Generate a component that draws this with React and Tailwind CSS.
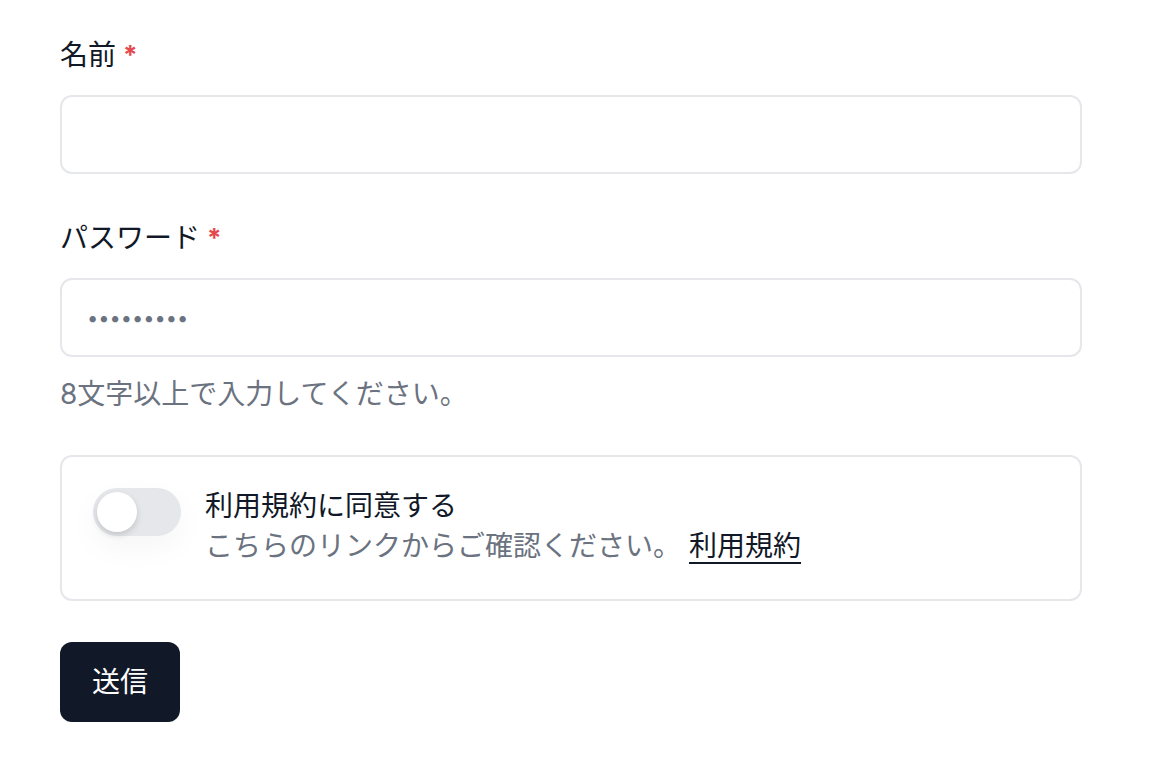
const font = { fontFamily: 'Inter, "Noto Sans CJK JP", sans-serif' };

const Label = ({ children, className = '' }) => (
    <label className={`flex items-center h-[40px] text-[28px] leading-[40px] text-[#111827] ${className}`}>
        {children}
        <span className="ml-[7px] text-[26px] font-bold text-[#e5484d]">*</span>
    </label>
);

const App = () => {
    return (
        <div className="min-h-screen bg-white pl-[60px] pt-[35px]" style={font}>
            <form className="w-[1022px] flex flex-col" onSubmit={(e) => e.preventDefault()}>
                {/* Name */}
                <Label>名前</Label>
                <input
                    type="text"
                    className="mt-[20px] h-[79px] w-full rounded-[12px] border-2 border-[#e5e7eb] px-[26px] text-[28px] text-[#111827] outline-none"
                />

                {/* Password */}
                <Label className="mt-[44px]">パスワード</Label>
                <input
                    type="password"
                    placeholder="•••••••••"
                    className="mt-[20px] h-[79px] w-full rounded-[12px] border-2 border-[#e5e7eb] pl-[25px] pr-[26px] text-[20px] text-[#111827] placeholder:text-[#6b7280] outline-none"
                />
                <p className="mt-[17px] h-[40px] text-[28px] leading-[40px] text-[#6b7280]">
                    8文字以上で入力してください。
                </p>

                {/* Terms */}
                <div className="mt-[41px] h-[146px] rounded-[12px] border-2 border-[#e5e7eb] pl-[31px] pt-[29px] flex items-start gap-[24px]">
                    <button
                        type="button"
                        className="mt-[2px] w-[88px] h-[48px] shrink-0 rounded-full bg-[#e5e7eb] p-[4px] flex items-center shadow-[0_12px_30px_rgba(0,0,0,0.04)]"
                    >
                        <span className="w-[40px] h-[40px] rounded-full bg-white shadow-[0_3px_6px_rgba(0,0,0,0.15)]" />
                    </button>
                    <div className="flex flex-col text-[28px] leading-[40px]">
                        <span className="text-[#111827]">利用規約に同意する</span>
                        <span className="text-[#6b7280]">
                            こちらのリンクからご確認ください。
                            <a href="#" className="ml-[8px] text-[#111827] underline underline-offset-[6px] decoration-2">利用規約</a>
                        </span>
                    </div>
                </div>

                {/* Submit */}
                <div className="mt-[41px]">
                    <button
                        type="submit"
                        className="w-[120px] h-[80px] rounded-[12px] bg-[#111827] text-white text-[28px]"
                    >
                        送信
                    </button>
                </div>
            </form>
        </div>
    );
};

export default App;
